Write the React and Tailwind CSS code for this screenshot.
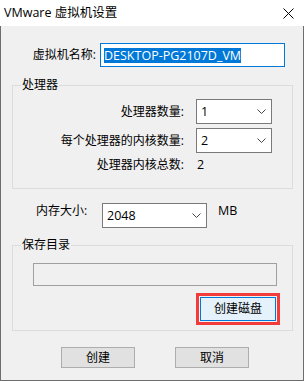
import React from "react";

function Chevron() {
  return (
    <svg width="9" height="5" viewBox="0 0 9 5" className="block">
      <polyline points="0.5,0.5 4.5,4.5 8.5,0.5" fill="none" stroke="#444" strokeWidth="1" />
    </svg>
  );
}

function Combo({ value, w }) {
  return (
    <div className={`${w} h-[25px] border border-[#7a7a7a] bg-white flex items-center justify-between pl-[4px] pr-[5px]`}>
      <span className="leading-[16px] text-[12.5px]">{value}</span>
      <Chevron />
    </div>
  );
}

export default function App() {
  return (
    <div className="w-[304px] h-[381px] flex flex-col bg-[#f0f0f0] text-black text-[12px] font-['Open_Sans','Noto_Sans_CJK_SC',sans-serif]">
      <div className="h-[26px] bg-white flex items-center justify-between pl-[4px] pr-[10px] shrink-0">
        <span className="leading-[16px] text-[12.5px]">VMware 虚拟机设置</span>
        <svg width="11" height="11" viewBox="0 0 11 11" className="block">
          <path d="M0.5 0.5 L10.5 10.5 M10.5 0.5 L0.5 10.5" stroke="#000" strokeWidth="1" fill="none" />
        </svg>
      </div>
      <div className="flex-1 flex flex-col border-x border-b border-[#6d6d6d]">
        <div className="mt-[17px] pl-[11px] flex items-center h-[24px]">
          <span className="w-[84px] text-right leading-[16px]">虚拟机名称:</span>
          <div className="ml-[4px] w-[185px] h-[24px] border border-[#0078d7] bg-white flex items-center pl-[3px]">
            <span className="bg-[#0078d7] text-white leading-[15px] text-[12.5px]">DESKTOP-PG2107D_VM</span>
          </div>
        </div>

        <fieldset className="mt-[10px] ml-[11px] w-[281px] h-[112px] border border-[#dcdcdc] box-border">
          <legend className="ml-[8px] px-[1px] leading-[16px]">处理器</legend>
          <div className="mt-[6px] flex items-center">
            <span className="w-[171px] text-right leading-[16px]">处理器数量:</span>
            <div className="ml-[12px]"><Combo value="1" w="w-[76px]" /></div>
          </div>
          <div className="mt-[4px] flex items-center">
            <span className="w-[171px] text-right leading-[16px]">每个处理器的内核数量:</span>
            <div className="ml-[12px]"><Combo value="2" w="w-[76px]" /></div>
          </div>
          <div className="mt-[4px] flex items-center">
            <span className="w-[171px] text-right leading-[16px]">处理器内核总数:</span>
            <span className="ml-[13px] leading-[16px] text-[12.5px]">2</span>
          </div>
        </fieldset>

        <div className="mt-[14px] pl-[35px] flex items-start h-[25px]">
          <span className="w-[66px] leading-[16px]">内存大小:</span>
          <Combo value="2048" w="w-[105px]" />
          <span className="ml-[11px] leading-[16px] text-[12.5px]">MB</span>
        </div>

        <fieldset className="mt-[9px] ml-[11px] w-[281px] h-[94px] border border-[#dcdcdc] box-border flex flex-col">
          <legend className="ml-[8px] px-[1px] leading-[16px]">保存目录</legend>
          <div className="mt-[10px] ml-[20px] w-[244px] h-[23px] border border-[#a0a0a0] bg-[#f0f0f0]"></div>
          <div className="mt-[7px] flex justify-end pr-[12px]">
            <div className="w-[84px] h-[32px] border-[3px] border-[#f23c3c] p-[1px]">
              <div className="w-full h-full border border-[#0078d7] bg-[#e5f1fb] flex items-center justify-center leading-[16px]">创建磁盘</div>
            </div>
          </div>
        </fieldset>

        <div className="mt-[16px] pl-[60px] flex gap-[40px]">
          <div className="w-[74px] h-[21px] bg-[#e1e1e1] border border-[#adadad] flex items-center justify-center leading-[16px]">创建</div>
          <div className="w-[74px] h-[21px] bg-[#e1e1e1] border border-[#adadad] flex items-center justify-center leading-[16px]">取消</div>
        </div>
      </div>
    </div>
  );
}
